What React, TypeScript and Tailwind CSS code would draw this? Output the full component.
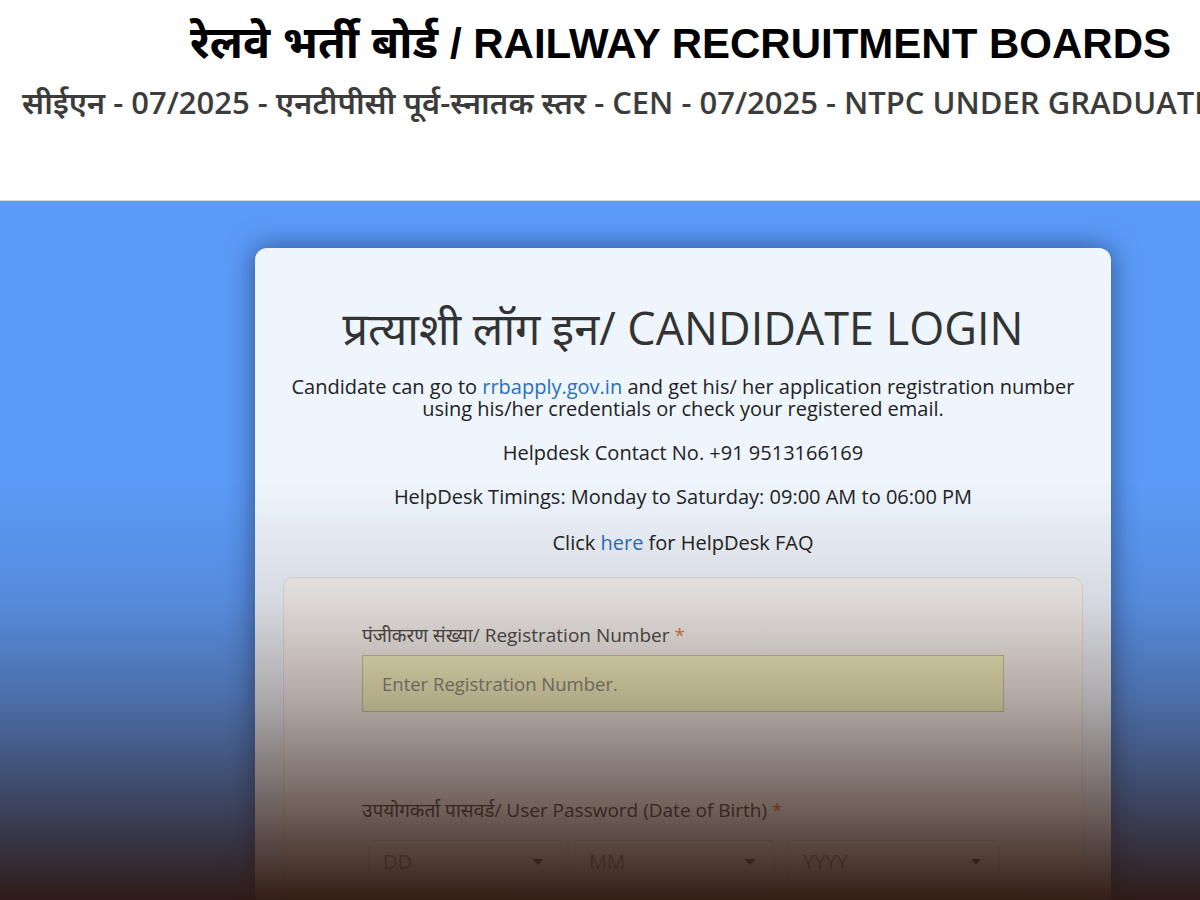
export default function App() {
  return (
    <div className="relative w-[1200px] h-[900px] overflow-hidden bg-white flex flex-col font-['Open_Sans','Noto_Sans',sans-serif]">
      {/* Header */}
      <header className="h-[200px] shrink-0 flex flex-col">
        <h1 className="pl-[190px] pt-[17px] text-[42px] leading-[52px] font-bold text-black whitespace-nowrap font-['Liberation_Sans','Noto_Sans',sans-serif]">
          <span className="text-[45px]">रेलवे भर्ती बोर्ड</span> / RAILWAY RECRUITMENT BOARDS
        </h1>
        <p className="pl-[22px] mt-[12px] text-[31px] leading-[40px] font-semibold text-[#3c3c3c] whitespace-nowrap">
          सीईएन - 07/2025 - एनटीपीसी पूर्व-स्नातक स्तर - CEN - 07/2025 - NTPC UNDER GRADUATE
        </p>
      </header>

      {/* Blue area */}
      <main className="flex-1 bg-[#5b9bf8] border-t border-[#d3d8de] pl-[255px] pt-[47px]">
        <div className="w-[856px] rounded-t-[12px] bg-[#eef5fd] shadow-[0_0_28px_rgba(10,20,50,0.55)] pt-[50px] h-[700px] text-center text-[#222]">
          <h2 className="text-[45px] leading-[60px] text-[#333]">
            प्रत्याशी लॉग इन/ CANDIDATE LOGIN
          </h2>
          <p className="mt-[18px] text-[20px] leading-[22px] whitespace-nowrap">
            Candidate can go to <span className="text-[#2b6fbe]">rrbapply.gov.in</span> and get his/ her application registration number
            <br />
            using his/her credentials or check your registered email.
          </p>
          <p className="mt-[22px] text-[20px] leading-[22px]">Helpdesk Contact No. +91 9513166169</p>
          <p className="mt-[22px] text-[20px] leading-[22px]">HelpDesk Timings: Monday to Saturday: 09:00 AM to 06:00 PM</p>
          <p className="mt-[24px] text-[20px] leading-[22px]">
            Click <span className="text-[#2b6fbe]">here</span> for HelpDesk FAQ
          </p>

          {/* Form panel */}
          <div className="mx-[28px] mt-[23px] h-[400px] rounded-t-[10px] bg-[#f6f4f2] border border-[#e2e2e2] pt-[46px] px-[78px] text-left">
            <label className="block text-[19px] leading-[22px] text-[#4a4a4a]">
              पंजीकरण संख्या/ Registration Number <span className="text-[#e8793a]">*</span>
            </label>
            <div className="mt-[9px] h-[57px] border border-[#c8c6a4] bg-[#f6f8c6] flex items-center pl-[19px] text-[18.5px] text-[#8a8a80]">
              Enter Registration Number.
            </div>

            <label className="block mt-[87px] text-[19px] leading-[22px] text-[#4a4a4a]">
              उपयोगकर्ता पासवर्ड/ User Password (Date of Birth) <span className="text-[#e8793a]">*</span>
            </label>
            <div className="mt-[19px] ml-[6px] flex gap-[12px]">
              {[
                { t: "DD", w: "w-[194px]" },
                { t: "MM", w: "w-[200px]" },
                { t: "YYYY", w: "w-[212px]" },
              ].map((s, i) => (
                <div
                  key={s.t}
                  className={`${s.w} ${i === 2 ? "ml-[2px]" : ""} h-[44px] border border-[#e0dcd8] bg-[#f7f5f3] rounded-[3px] flex items-center justify-between pl-[14px] pr-[18px] text-[20px] text-[#9a9a9a]`}
                >
                  <span>{s.t}</span>
                  <svg width="10" height="6" viewBox="0 0 10 6">
                    <path d="M0 0h10L5 6z" fill="#555" />
                  </svg>
                </div>
              ))}
            </div>
          </div>
        </div>
      </main>

      {/* Darkening overlay at the bottom of the photo */}
      <div className="pointer-events-none absolute inset-x-0 top-[480px] bottom-0 bg-[linear-gradient(to_bottom,rgba(44,22,14,0)_0px,rgba(44,22,14,0.12)_120px,rgba(44,22,14,0.34)_220px,rgba(44,22,14,0.67)_330px,rgba(44,22,14,0.96)_420px)]" />
    </div>
  );
}
